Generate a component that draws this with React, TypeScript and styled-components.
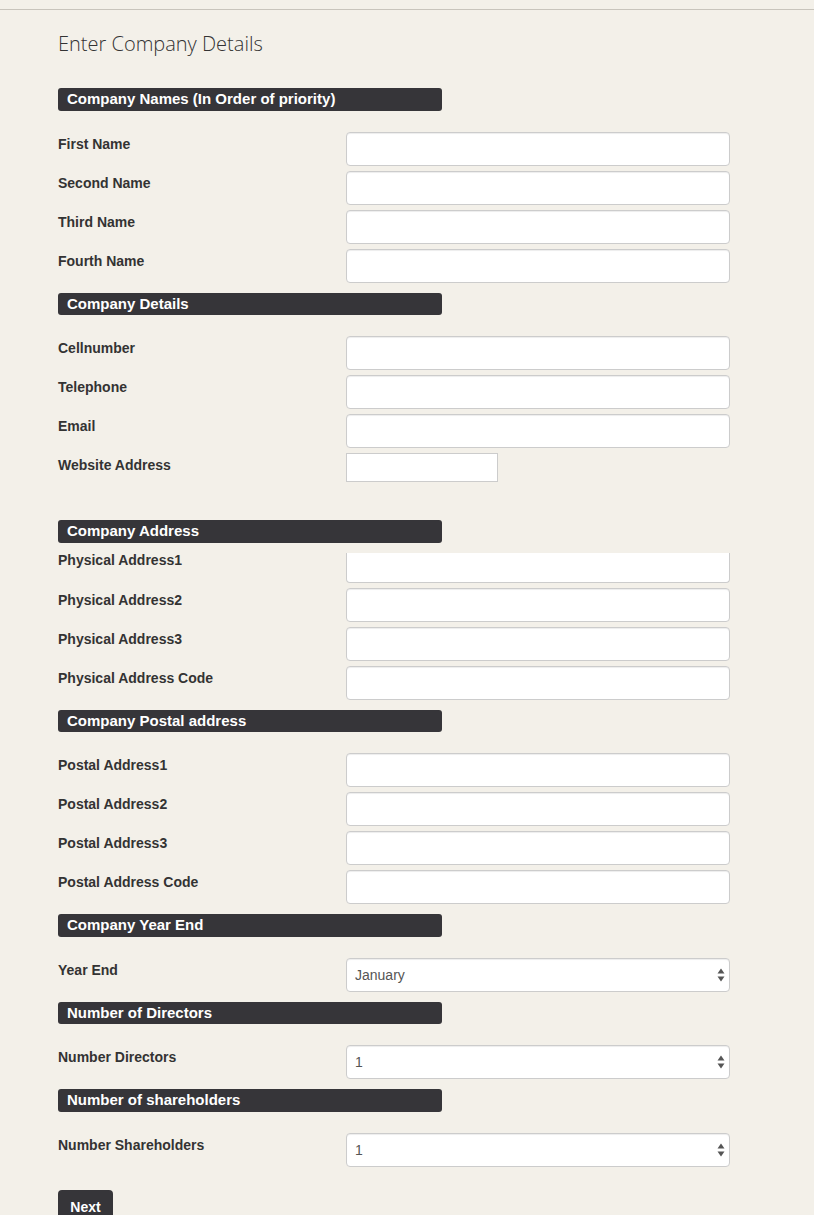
import React from 'react';
import styled, { createGlobalStyle } from 'styled-components';

const GlobalStyle = createGlobalStyle`
  html, body {
    margin: 0;
    padding: 0;
    background: #f3f0e9;
  }
  body {
    font-family: 'Liberation Sans', Arial, Helvetica, sans-serif;
    font-size: 14px;
    color: #333;
  }
  * {
    box-sizing: border-box;
  }
`;

const TopRule = styled.div`
  height: 10px;
  border-bottom: 1px solid #c8c4bc;
`;

const Page = styled.div`
  padding: 0 58px 40px 58px;
`;

const Title = styled.h2`
  margin: 22px 0 32px 0;
  font-family: 'Open Sans', 'Liberation Sans', sans-serif;
  font-weight: 300;
  font-size: 20px;
  line-height: 24px;
  color: #333;
`;

const Section = styled.section<{ $space: number }>`
  margin-bottom: ${(p) => p.$space}px;
`;

const SectionHeader = styled.div`
  width: 384px;
  height: 22.5px;
  line-height: 22.5px;
  padding: 0 9px;
  background: #363539;
  color: #fff;
  font-weight: 700;
  font-size: 15px;
  border-radius: 3px;
  white-space: nowrap;
`;

const FieldList = styled.div<{ $top: number }>`
  display: flex;
  flex-direction: column;
  gap: 5px;
  margin-top: ${(p) => p.$top}px;
`;

const Row = styled.div`
  display: grid;
  grid-template-columns: 288px 384px;
  align-items: start;
`;

const Label = styled.label<{ $shift?: number }>`
  padding-top: 2px;
  margin-top: ${(p) => p.$shift ?? 0}px;
  font-weight: 700;
  font-size: 14px;
  line-height: 20px;
  color: #333;
`;

const TextInput = styled.input<{ $clipped?: boolean }>`
  display: block;
  width: 100%;
  height: ${(p) => (p.$clipped ? '30px' : '34px')};
  padding: 6px 9px;
  font-family: 'Liberation Sans', Arial, sans-serif;
  font-size: 14px;
  color: #555;
  background: #fff;
  border: 1px solid #ccc;
  border-top: ${(p) => (p.$clipped ? 'none' : '1px solid #ccc')};
  border-radius: ${(p) => (p.$clipped ? '0 0 4px 4px' : '4px')};
  box-shadow: ${(p) => (p.$clipped ? 'none' : 'inset 0 1px 1px rgba(0, 0, 0, 0.075)')};
  outline: none;
`;

const ShortInput = styled.input`
  display: block;
  width: 152px;
  height: 29px;
  padding: 4px 6px;
  font-family: 'Liberation Sans', Arial, sans-serif;
  font-size: 14px;
  background: #fff;
  border: 1px solid #ccc;
  border-radius: 0;
  outline: none;
`;

const SelectWrap = styled.div`
  position: relative;
  width: 100%;
`;

const Select = styled.select`
  display: block;
  width: 100%;
  height: 34px;
  padding: 0 24px 0 8px;
  font-family: 'Liberation Sans', Arial, sans-serif;
  font-size: 14px;
  color: #555;
  background: #fff;
  border: 1px solid #ccc;
  border-radius: 4px;
  box-shadow: inset 0 1px 1px rgba(0, 0, 0, 0.075);
  appearance: none;
  -webkit-appearance: none;
  outline: none;
`;

const Arrows = styled.svg`
  position: absolute;
  right: 5px;
  top: 50%;
  transform: translateY(-50%);
  pointer-events: none;
`;

const NextButton = styled.button`
  padding: 6px 12px;
  height: 34px;
  min-width: 55px;
  font-family: 'Liberation Sans', Arial, sans-serif;
  font-weight: 700;
  font-size: 14px;
  line-height: 20px;
  color: #fff;
  background: #363539;
  border: none;
  border-radius: 4px;
  cursor: pointer;
`;

type Field =
  | { label: string; kind: 'text' | 'short' | 'clipped' }
  | { label: string; kind: 'select'; options: string[] };

type SectionData = {
  title: string;
  top: number;
  space: number;
  fields: Field[];
};

const months = [
  'January', 'February', 'March', 'April', 'May', 'June',
  'July', 'August', 'September', 'October', 'November', 'December',
];
const counts = ['1', '2', '3', '4', '5', '6', '7', '8', '9', '10'];

const sections: SectionData[] = [
  {
    title: 'Company Names (In Order of priority)',
    top: 21,
    space: 10,
    fields: [
      { label: 'First Name', kind: 'text' },
      { label: 'Second Name', kind: 'text' },
      { label: 'Third Name', kind: 'text' },
      { label: 'Fourth Name', kind: 'text' },
    ],
  },
  {
    title: 'Company Details',
    top: 21,
    space: 38,
    fields: [
      { label: 'Cellnumber', kind: 'text' },
      { label: 'Telephone', kind: 'text' },
      { label: 'Email', kind: 'text' },
      { label: 'Website Address', kind: 'short' },
    ],
  },
  {
    title: 'Company Address',
    top: 10,
    space: 10,
    fields: [
      { label: 'Physical Address1', kind: 'clipped' },
      { label: 'Physical Address2', kind: 'text' },
      { label: 'Physical Address3', kind: 'text' },
      { label: 'Physical Address Code', kind: 'text' },
    ],
  },
  {
    title: 'Company Postal address',
    top: 21,
    space: 10,
    fields: [
      { label: 'Postal Address1', kind: 'text' },
      { label: 'Postal Address2', kind: 'text' },
      { label: 'Postal Address3', kind: 'text' },
      { label: 'Postal Address Code', kind: 'text' },
    ],
  },
  {
    title: 'Company Year End',
    top: 21,
    space: 10,
    fields: [{ label: 'Year End', kind: 'select', options: months }],
  },
  {
    title: 'Number of Directors',
    top: 21,
    space: 10,
    fields: [{ label: 'Number Directors', kind: 'select', options: counts }],
  },
  {
    title: 'Number of shareholders',
    top: 21,
    space: 23,
    fields: [{ label: 'Number Shareholders', kind: 'select', options: counts }],
  },
];

const SelectArrows = () => (
  <Arrows width="8" height="15" viewBox="0 0 8 15">
    <path d="M4 1 L7.5 6 L0.5 6 Z" fill="#555" />
    <path d="M0.5 9 L7.5 9 L4 14 Z" fill="#555" />
  </Arrows>
);

const renderControl = (field: Field) => {
  switch (field.kind) {
    case 'short':
      return <ShortInput type="text" />;
    case 'clipped':
      return <TextInput type="text" $clipped />;
    case 'select':
      return (
        <SelectWrap>
          <Select defaultValue={field.options[0]}>
            {field.options.map((o) => (
              <option key={o} value={o}>
                {o}
              </option>
            ))}
          </Select>
          <SelectArrows />
        </SelectWrap>
      );
    default:
      return <TextInput type="text" />;
  }
};

const App: React.FC = () => {
  return (
    <>
      <GlobalStyle />
      <TopRule />
      <Page>
        <Title>Enter Company Details</Title>
        <form onSubmit={(e) => e.preventDefault()}>
          {sections.map((s) => (
            <Section key={s.title} $space={s.space}>
              <SectionHeader>{s.title}</SectionHeader>
              <FieldList $top={s.top}>
                {s.fields.map((f) => (
                  <Row key={f.label}>
                    <Label $shift={f.kind === 'clipped' ? -5 : 0}>{f.label}</Label>
                    {renderControl(f)}
                  </Row>
                ))}
              </FieldList>
            </Section>
          ))}
          <NextButton type="submit">Next</NextButton>
        </form>
      </Page>
    </>
  );
};

export default App;
